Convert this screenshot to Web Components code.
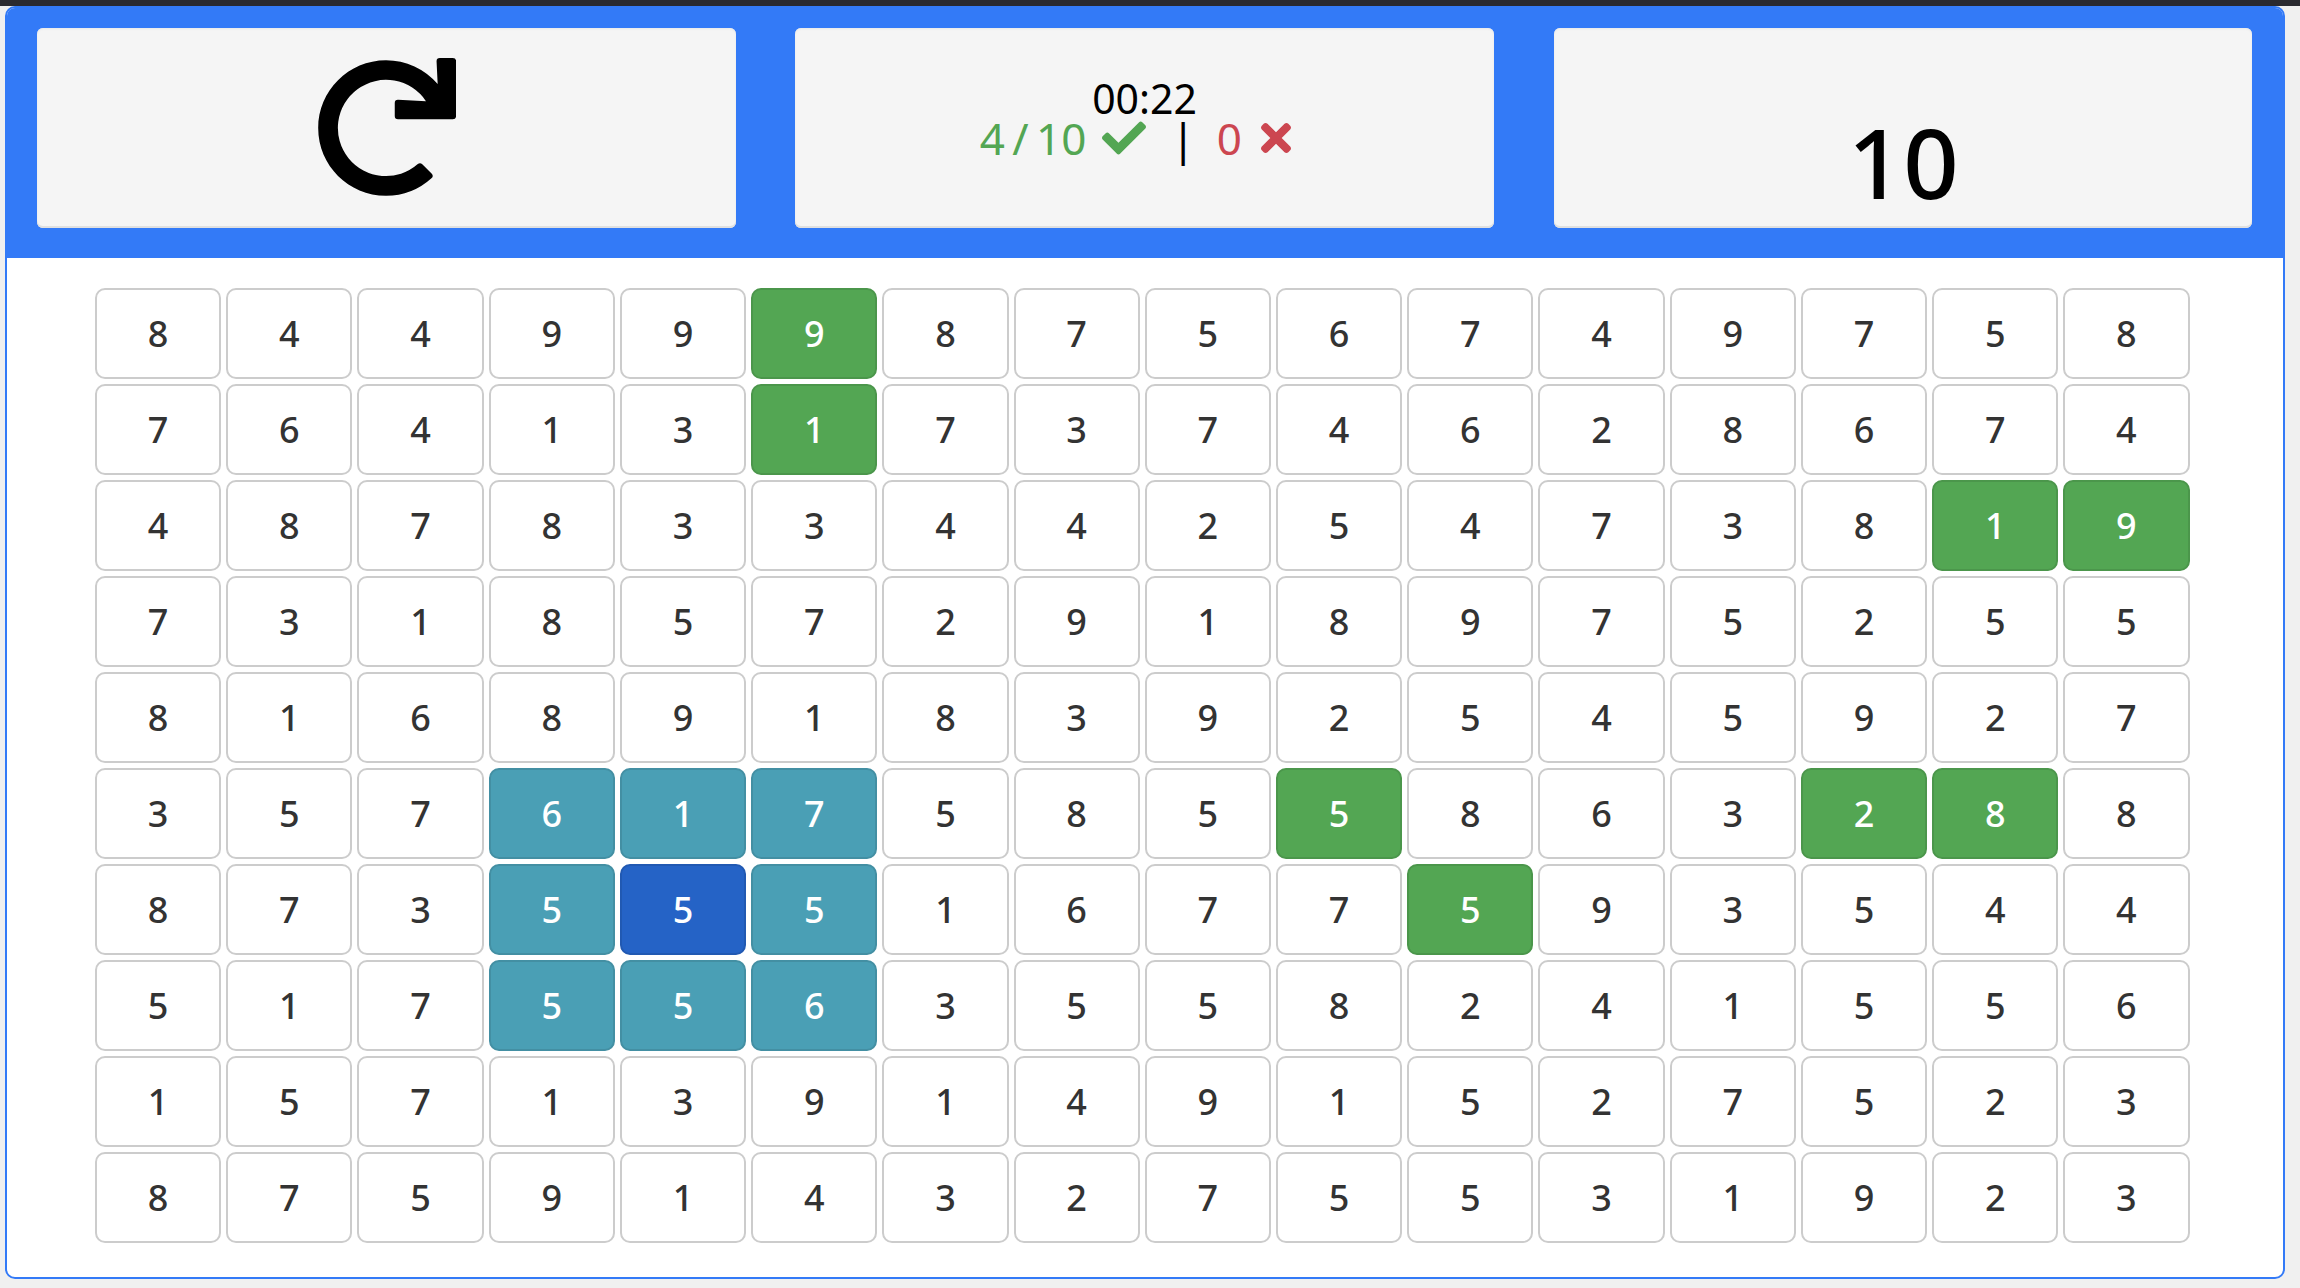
<!DOCTYPE html>
<html>
<head>
<meta charset="utf-8">
<title>Number grid</title>
<style>
html, body { margin: 0; height: 100%; }
body { background: #f0f0f0; border-top: 6px solid #2a2a30; box-sizing: border-box; font-family: "Noto Sans", sans-serif; }
</style>
</head>
<body>
<game-panel>
  <score-card slot="cards">
    <svg style="width:140px;height:140px;display:block" viewBox="0 0 512 512"><path d="M500.33 0h-47.41a12 12 0 0 0-12 12.57l4 82.76A247.42 247.42 0 0 0 256 8C119.34 8 8.02 119.53 8 256.19 8 393.07 119.1 504 256 504a247.1 247.1 0 0 0 166.18-63.91 12 12 0 0 0 .48-17.43l-34-34a12 12 0 0 0-16.38-.55A176 176 0 1 1 402.1 157.8l-101.53-4.87a12 12 0 0 0-12.57 12v47.41a12 12 0 0 0 12 12h200.33a12 12 0 0 0 12-12V12a12 12 0 0 0-12-12z"/></svg>
  </score-card>
  <score-card slot="cards"><game-stats></game-stats></score-card>
  <score-card slot="cards" class="target"><target-count value="10"></target-count></score-card>
  <game-board slot="board"></game-board>
</game-panel>

<script>
const panelTemplate = document.createElement('template');
panelTemplate.innerHTML = `
<style>
:host { display: block; margin: 0 15px 0 5px; border: 2px solid #337af7; border-radius: 10px; background: #fff; overflow: hidden; }
.head { display: flex; gap: 59.8px; padding: 20px 30px 30px; background: #337af7; }
.body { padding: 30px 0 34px 88px; }
</style>
<div class="head"><slot name="cards"></slot></div>
<div class="body"><slot name="board"></slot></div>
`;

class GamePanel extends HTMLElement {
    connectedCallback() {
        this.attachShadow({mode: 'open'});
        this.shadowRoot.appendChild(panelTemplate.content.cloneNode(true));
    }
}

const cardTemplate = document.createElement('template');
cardTemplate.innerHTML = `
<style>
:host { display: flex; align-items: center; justify-content: center; width: 698.5px; height: 200px; box-sizing: border-box; background: #f5f5f5; border-radius: 6px; box-shadow: inset 0 -2px 0 #e0e0e0, inset 0 1px 2px #e8e8e8; }
</style>
<slot></slot>
`;

class ScoreCard extends HTMLElement {
    connectedCallback() {
        this.attachShadow({mode: 'open'});
        this.shadowRoot.appendChild(cardTemplate.content.cloneNode(true));
    }
}

const statsTemplate = document.createElement('template');
statsTemplate.innerHTML = `
<style>
:host { display: flex; flex-direction: column; align-items: center; font-family: "Noto Sans", sans-serif; font-weight: 450; margin-top: -8px; }
.time { font-size: 41px; line-height: 28px; color: #000; }
.row { display: flex; align-items: center; font-size: 44px; line-height: 52px; margin-left: -18px; }
.ok { color: #53a653; }
.bad { color: #cc4650; }
.count { word-spacing: -4px; }
.sep { color: #000; margin: 0 21.5px 0 24.5px; }
svg { height: 44px; display: block; fill: currentColor; }
.check { width: 44px; margin-left: 16px; }
.cross { width: 30px; margin-left: 19.5px; }
</style>
<div class="time">00:22</div>
<div class="row">
  <span class="ok count">4 / 10</span>
  <svg class="check ok" viewBox="0 0 512 512"><path d="M173.898 439.404l-166.4-166.4c-9.997-9.997-9.997-26.206 0-36.204l36.203-36.204c9.997-9.998 26.207-9.998 36.204 0L192 312.69 432.095 72.596c9.997-9.997 26.207-9.997 36.204 0l36.203 36.204c9.997 9.997 9.997 26.206 0 36.204l-294.4 294.401c-9.998 9.997-26.207 9.997-36.204-.001z"/></svg>
  <span class="sep">|</span>
  <span class="bad">0</span>
  <svg class="cross bad" viewBox="0 0 352 512"><path d="M242.72 256l100.07-100.07c12.28-12.28 12.28-32.19 0-44.48l-22.24-22.24c-12.28-12.28-32.19-12.28-44.48 0L176 189.28 75.93 89.21c-12.28-12.28-32.19-12.28-44.48 0L9.21 111.45c-12.28 12.28-12.28 32.19 0 44.48L109.28 256 9.21 356.07c-12.28 12.28-12.28 32.19 0 44.48l22.24 22.24c12.28 12.28 32.2 12.28 44.48 0L176 322.72l100.07 100.07c12.28 12.28 32.2 12.28 44.48 0l22.24-22.24c12.28-12.28 12.28-32.19 0-44.48L242.72 256z"/></svg>
</div>
`;

class GameStats extends HTMLElement {
    connectedCallback() {
        this.attachShadow({mode: 'open'});
        this.shadowRoot.appendChild(statsTemplate.content.cloneNode(true));
    }
}

class TargetCount extends HTMLElement {
    connectedCallback() {
        this.attachShadow({mode: 'open'});
        this.shadowRoot.innerHTML = `
<style>
:host { display: block; font-family: "Noto Sans", sans-serif; font-size: 97px; font-weight: 500; line-height: 134px; color: #000; margin-top: 66px; margin-left: 1px; }
</style>
${this.getAttribute("value")}`;
    }
}

const cellColors = {
    green: "background:#53a653;border-color:#4b964b;color:#fff;",
    teal: "background:#4a9fb5;border-color:#438fa3;color:#fff;",
    blue: "background:#2563c6;border-color:#2159b2;color:#fff;"
};

class GameCell extends HTMLElement {
    connectedCallback() {
        const state = this.getAttribute("state");
        this.attachShadow({mode: 'open'});
        this.shadowRoot.innerHTML = `
<style>
:host { display: flex; align-items: center; justify-content: center; box-sizing: border-box; height: 91px; border: 2px solid #ccc; border-radius: 10px; background: #fff; color: #333; font-family: "Noto Sans", sans-serif; font-size: 36px; font-weight: 470; ${cellColors[state] || ""} }
</style>
<slot></slot>`;
    }
}

// number grid and the cells that are marked
const rows = [
    "8449998756749758",
    "7641317374628674",
    "4878334425473819",
    "7318572918975255",
    "8168918392545927",
    "3576175855863288",
    "8735551677593544",
    "5175563558241556",
    "1571391491527523",
    "8759143275531923"
];
const marked = {
    "0,5": "green", "1,5": "green", "2,14": "green", "2,15": "green",
    "5,9": "green", "5,13": "green", "5,14": "green", "6,10": "green",
    "5,3": "teal", "5,4": "teal", "5,5": "teal", "6,3": "teal", "6,5": "teal",
    "7,3": "teal", "7,4": "teal", "7,5": "teal",
    "6,4": "blue"
};

class GameBoard extends HTMLElement {
    connectedCallback() {
        this.attachShadow({mode: 'open'});
        let cells = "";
        rows.forEach((row, r) => {
            [...row].forEach((n, c) => {
                const state = marked[r + "," + c] || "";
                cells += `<game-cell state="${state}">${n}</game-cell>`;
            });
        });
        this.shadowRoot.innerHTML = `
<style>
:host { display: grid; grid-template-columns: repeat(16, 126.22px); gap: 5px; }
</style>
${cells}`;
    }
}

customElements.define("game-panel", GamePanel);
customElements.define("score-card", ScoreCard);
customElements.define("game-stats", GameStats);
customElements.define("target-count", TargetCount);
customElements.define("game-cell", GameCell);
customElements.define("game-board", GameBoard);
</script>
</body>
</html>
